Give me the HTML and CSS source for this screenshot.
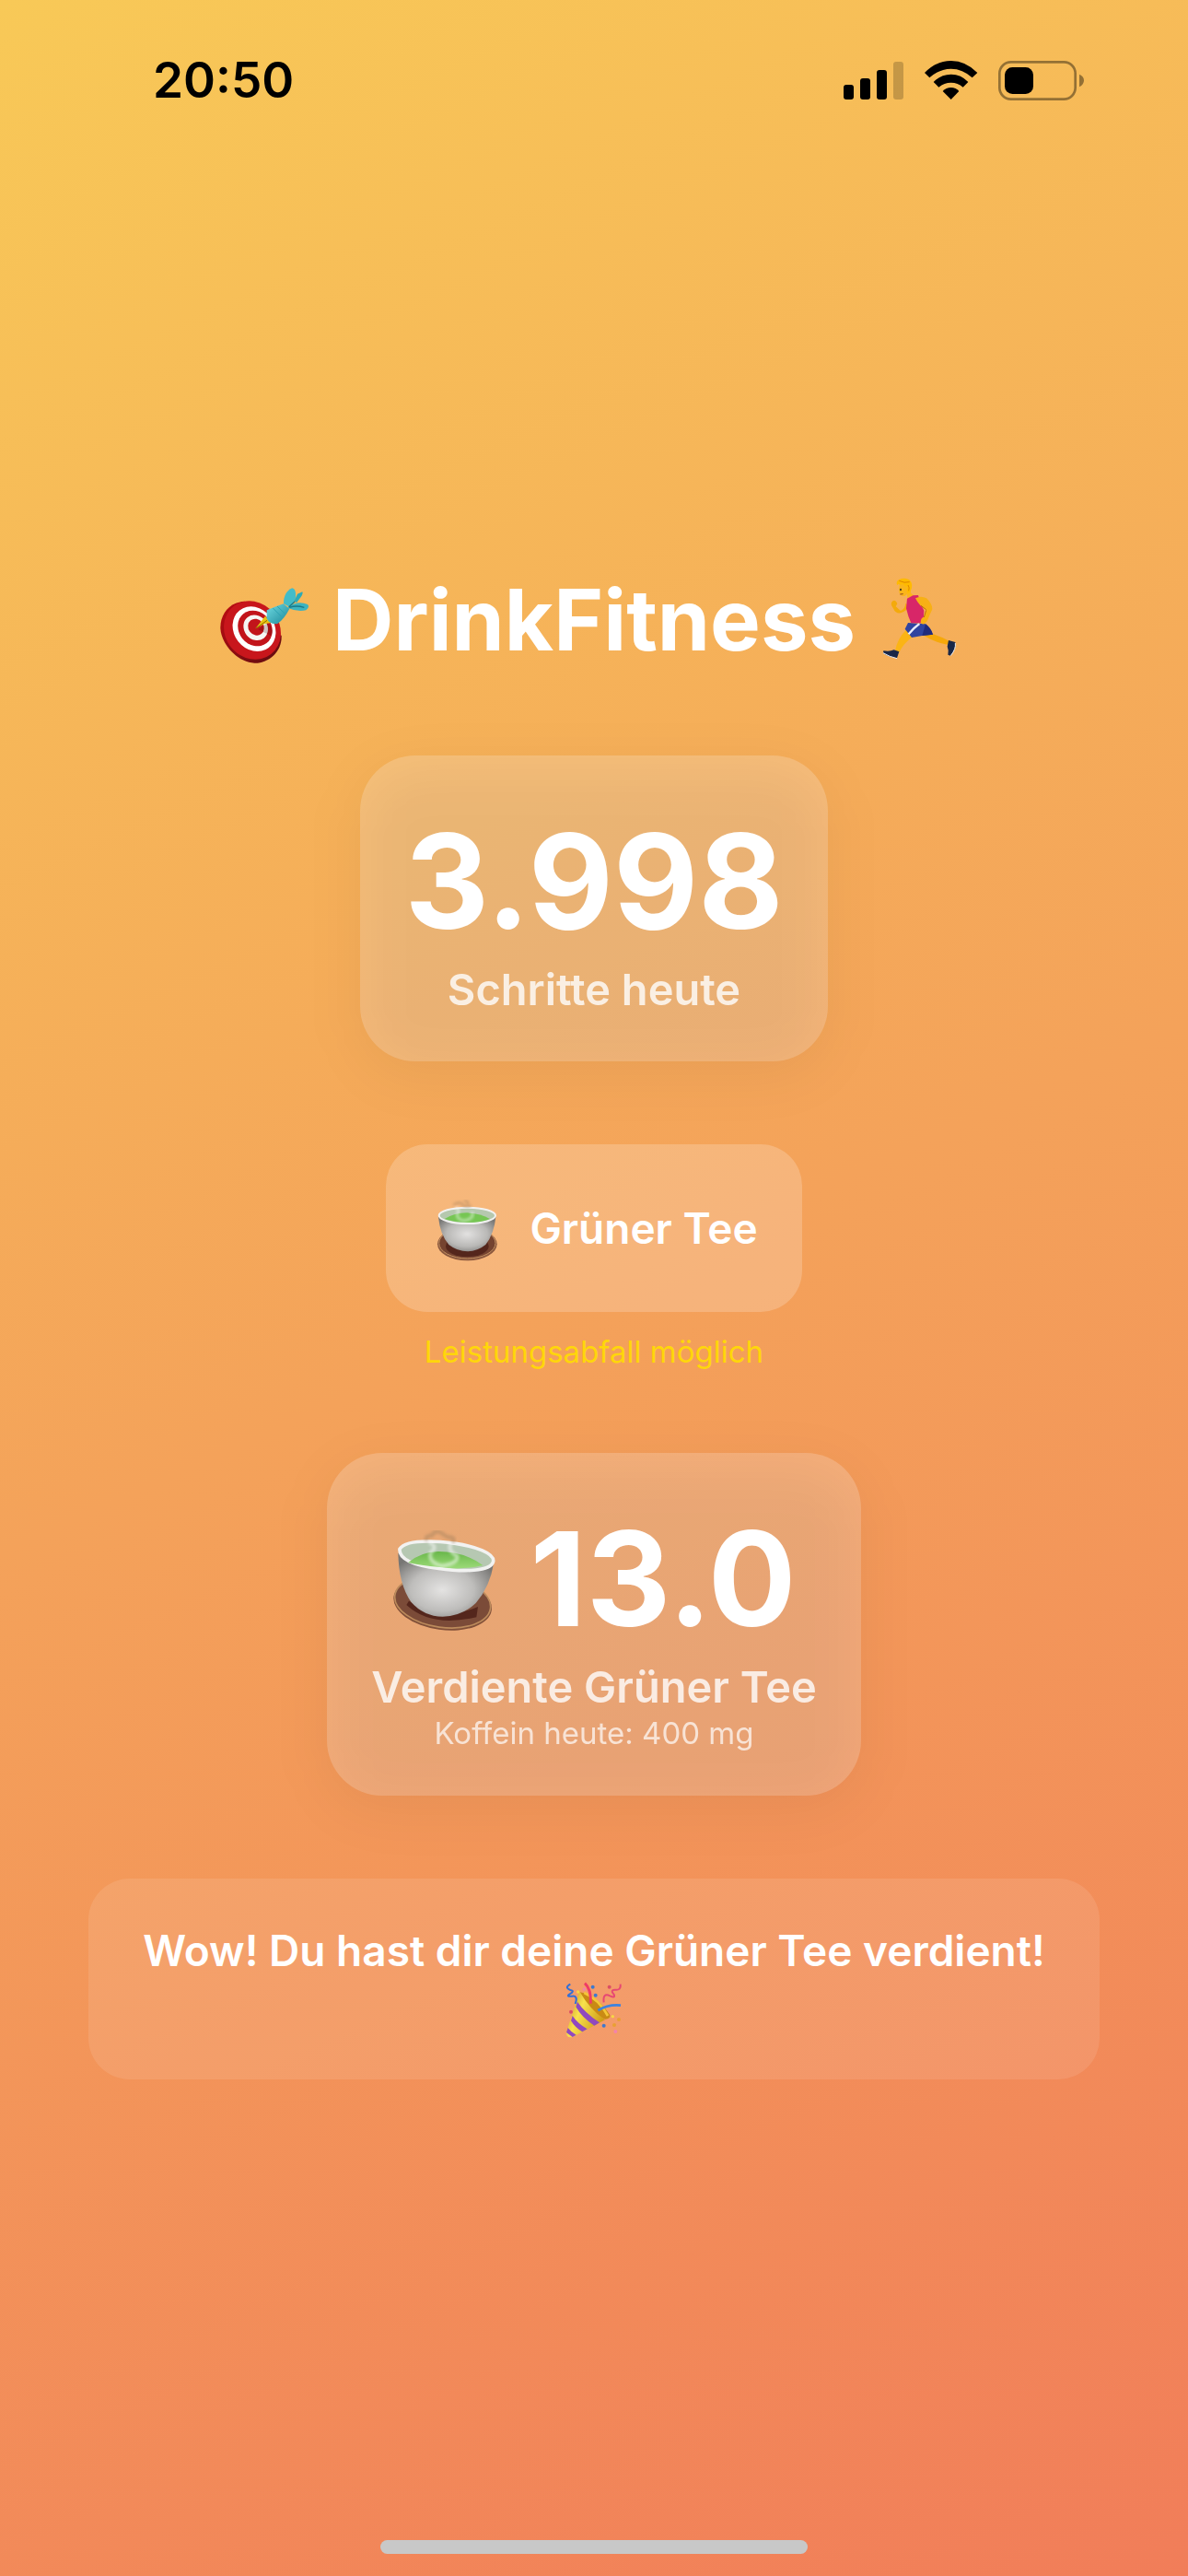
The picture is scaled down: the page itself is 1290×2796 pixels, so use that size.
FILE: index.html
```html
<!DOCTYPE html>
<html lang="de">
<head>
    <meta charset="UTF-8">
    <meta name="viewport" content="width=device-width, initial-scale=1.0">
    <title>DrinkFitness</title>
    <link rel="stylesheet" href="styles.css">
</head>
<body>
    <header class="status-bar">
        <time class="clock">20:50</time>
        <svg class="status-icons" viewBox="75 66 789 144" role="img" aria-label="Mobilfunk, WLAN, Akku">
            <!-- Mobilfunk -->
            <rect x="78" y="153" width="33" height="48" rx="9"/>
            <rect x="132" y="132" width="33" height="69" rx="9"/>
            <rect x="186" y="105" width="33" height="96" rx="9"/>
            <rect x="240" y="78" width="33" height="123" rx="9" opacity="0.2"/>
            <!-- WLAN -->
            <path d="M342 114Q380 75 428 75T514 114L497 130Q466 101 428 101T358 130Z"/>
            <path d="M371 144Q395 119 428 119T484 144L467 161Q450 146 428 146T388 161Z"/>
            <path d="M401 174Q412 162 428 162T454 174L428 201Z"/>
            <!-- Akku -->
            <rect x="586" y="79" width="247" height="121" rx="37" fill="none" stroke="#000" stroke-width="8" opacity="0.4"/>
            <rect x="603" y="96" width="93" height="87" rx="25"/>
            <path d="M846 119Q861 125 861 139T846 160Z" opacity="0.4"/>
        </svg>
    </header>

    <main class="container">
        <h1>
            <svg class="title-icon" viewBox="48 39 300 300" aria-hidden="true">
                <defs>
                    <linearGradient id="disc-side" x1="0" y1="0" x2="1" y2="1">
                        <stop offset="0" stop-color="#c00c12"/>
                        <stop offset="1" stop-color="#5c0d10"/>
                    </linearGradient>
                    <linearGradient id="dart-body" x1="0" y1="0" x2="1" y2="1">
                        <stop offset="0" stop-color="#6fdbe3"/>
                        <stop offset="1" stop-color="#1b8798"/>
                    </linearGradient>
                </defs>
                <path d="M140 128C92 130 60 168 61 216C63 262 110 325 172 329C220 330 262 290 260 240Z" fill="url(#disc-side)"/>
                <ellipse cx="165" cy="222" rx="89" ry="99" transform="rotate(-38 165 222)" fill="#c8161c"/>
                <ellipse cx="171" cy="218" rx="66" ry="77" transform="rotate(-38 171 218)" fill="#fff"/>
                <ellipse cx="174" cy="216" rx="53" ry="61" transform="rotate(-38 174 216)" fill="#c2141b"/>
                <ellipse cx="176" cy="214" rx="38" ry="43" transform="rotate(-38 176 214)" fill="#f6f6f4"/>
                <ellipse cx="177" cy="212" rx="25" ry="28" transform="rotate(-38 177 212)" fill="#c2141b"/>
                <path d="M184 220L214 198Q240 222 226 240Q208 232 184 220Z" fill="#300" opacity="0.2"/>
                <path d="M175 217L207 176L216 186L228 198L206 201Z" fill="#e9c211"/>
                <path d="M177 216L213 190" stroke="#8c6b00" stroke-width="3"/>
                <path d="M212 157Q236 147 266 136L286 152Q270 184 247 201Q220 204 212 184Z" fill="url(#dart-body)"/>
                <path d="M232 150L260 178M246 144L271 168" stroke="#2ba3b2" stroke-width="3" fill="none"/>
                <path d="M267 136C266 112 277 91 295 85C309 88 307 111 304 126L286 146Z" fill="#43bcc8"/>
                <path d="M302 126L312 104L328 97Q331 103 323 114L309 133Z" fill="#2caab7"/>
                <path d="M281 147Q312 124 345 138Q353 146 340 157Q312 163 281 150Z" fill="#3db3bf"/>
                <path d="M284 146L304 128M286 148Q308 140 334 148" stroke="#18798a" stroke-width="4" fill="none"/>
            </svg>
            <span>DrinkFitness</span>
            <svg class="title-icon" viewBox="945 39 300 300" aria-hidden="true">
                <path d="M1030 134Q1030 150 1014 159L998 145L1003 136Q1000 126 992 125Q981 129 984 141L991 153Q997 168 1014 166Q1034 160 1042 144Z" fill="#f4aa0b"/>
                <path d="M1107 232Q1140 239 1172 257L1166 269Q1130 264 1086 238Z" fill="#f6a80a"/>
                <path d="M1031 222Q1002 251 996 290L1009 294Q1024 264 1056 241Z" fill="#fbb414"/>
                <path d="M1170 255L1192 261Q1196 283 1176 305L1168 302Q1171 286 1166 275Z" fill="#192747"/>
                <path d="M1192 264Q1195 283 1177 305" stroke="#e8edf4" stroke-width="3" fill="none"/>
                <path d="M958 289Q978 293 992 286L1009 292L1002 313Q974 309 957 296Z" fill="#192747"/>
                <path d="M957 296Q978 309 1002 314" stroke="#e8edf4" stroke-width="3" fill="none"/>
                <path d="M1038 198L1095 202Q1112 214 1119 236L1084 240L1050 246L1028 218Z" fill="#3044a0"/>
                <path d="M1095 202Q1112 214 1119 236L1084 240Z" fill="#202b7c"/>
                <path d="M1075 201Q1058 213 1040 235" stroke="#e9edfa" stroke-width="7" fill="none"/>
                <path d="M1011 73Q1007 87 1009 99Q1014 114 1028 110L1034 105L1037 118L1058 108Q1043 104 1047 89L1038 70Z" fill="#fab51b"/>
                <path d="M1035 119L1054 109L1071 108Q1080 139 1090 158L1087 199L1048 199Q1038 178 1032 151Z" fill="#d82668"/>
                <path d="M1062 118Q1080 108 1098 118Q1118 137 1117 154Q1107 175 1100 193Q1087 209 1079 197Q1079 182 1089 179L1097 156Q1074 143 1062 118Z" fill="#f8b015"/>
                <path d="M1097 155L1080 142M1097 157L1090 180" stroke="#bd7006" stroke-width="3" fill="none"/>
                <path d="M1003 76Q997 64 1009 57Q1028 49 1042 58Q1057 72 1046 96L1037 103Q1032 91 1037 82Q1026 80 1021 71Q1014 76 1006 72Z" fill="#ffba00"/>
                <path d="M1009 61Q1026 70 1043 65M1038 75Q1044 83 1040 94" stroke="#de8500" stroke-width="3" fill="none"/>
                <ellipse cx="1014" cy="90" rx="3" ry="4" fill="#3c3222"/>
                <path d="M1012 105L1022 104" stroke="#8e4620" stroke-width="3"/>
            </svg>
        </h1>

        <section class="card">
            <p class="number">3.998</p>
            <p class="label">Schritte heute</p>
        </section>

        <div class="drink">
            <button type="button" class="drink-button">
                <svg class="drink-icon" viewBox="215 231 216 216" aria-hidden="true">
                    <defs>
                        <radialGradient id="bowl-small" cx="0.5" cy="0.5" r="0.6">
                            <stop offset="0" stop-color="#e2e1e0"/>
                            <stop offset="0.6" stop-color="#b9b8b6"/>
                            <stop offset="1" stop-color="#777674"/>
                        </radialGradient>
                        <filter id="steam">
                            <feGaussianBlur stdDeviation="4"/>
                        </filter>
                    </defs>
                    <ellipse cx="324" cy="391" rx="97" ry="54" fill="#8b583e"/>
                    <ellipse cx="324" cy="388" rx="92" ry="50" fill="#754330" stroke="#c29061" stroke-width="3"/>
                    <ellipse cx="324" cy="398" rx="70" ry="34" fill="#54261c"/>
                    <path d="M230 302Q235 358 264 393Q292 415 325 415Q358 414 384 393Q412 356 417 302Z" fill="url(#bowl-small)"/>
                    <ellipse cx="324" cy="298" rx="92" ry="26" fill="#b5c8ae" stroke="#f2f2f1" stroke-width="6"/>
                    <path d="M250 309Q282 290 322 289Q368 291 398 309Q368 321 324 321Q279 320 250 309Z" fill="#76c653"/>
                    <path d="M285 269Q302 282 292 292Q288 311 314 315Q350 308 339 286" fill="none" stroke="#fff" stroke-width="8" opacity="0.5" filter="url(#steam)"/>
                    <path d="M279 264Q299 249 310 263T337 265M313 249Q332 251 323 263" fill="none" stroke="#a8845f" stroke-width="8" opacity="0.5" filter="url(#steam)"/>
                </svg>
                <span>Grüner Tee</span>
            </button>
            <p class="warning">Leistungsabfall möglich</p>
        </div>

        <section class="card">
            <div class="result">
                <svg class="result-icon" viewBox="30 30 342 360" aria-hidden="true">
                    <defs>
                        <radialGradient id="bowl" cx="0.46" cy="0.58" r="0.6">
                            <stop offset="0" stop-color="#e4e3e2"/>
                            <stop offset="0.55" stop-color="#bebdbb"/>
                            <stop offset="1" stop-color="#777674"/>
                        </radialGradient>
                        <linearGradient id="tea" x1="0" y1="0" x2="0" y2="1">
                            <stop offset="0" stop-color="#69b74a"/>
                            <stop offset="1" stop-color="#9cda78"/>
                        </linearGradient>
                    </defs>
                    <ellipse cx="194" cy="292" rx="161" ry="86" transform="rotate(8 194 292)" fill="#815039"/>
                    <ellipse cx="194" cy="287" rx="157" ry="83" transform="rotate(8 194 287)" fill="#7b4b38" stroke="#bc8b5c" stroke-width="5"/>
                    <path d="M76 297Q155 371 304 337L309 303Q195 353 84 284Z" fill="#54261c"/>
                    <path d="M49 128Q51 230 91 287Q132 334 194 335Q258 333 302 291Q348 238 361 158Z" fill="url(#bowl)"/>
                    <path d="M54 115C75 84 165 88 237 97C301 107 362 128 359 155C352 190 257 189 181 178C104 169 51 151 54 115Z" fill="#b6c8b2" stroke="#f2f2f1" stroke-width="11"/>
                    <path d="M82 159Q122 125 178 123Q263 122 325 168Q256 185 184 174Q119 168 82 159Z" fill="url(#tea)"/>
                    <path d="M149 93Q181 107 155 126Q146 158 191 170Q248 161 240 137Q207 118 222 94" fill="none" stroke="#fff" stroke-width="12" opacity="0.5" filter="url(#steam)"/>
                    <path d="M144 87Q133 73 158 71Q173 49 193 65T218 76Q238 80 225 93" fill="none" stroke="#a8845f" stroke-width="13" opacity="0.5" filter="url(#steam)"/>
                </svg>
                <p class="number">13.0</p>
            </div>
            <p class="label">Verdiente Grüner Tee</p>
            <p class="caption">Koffein heute: 400 mg</p>
        </section>

        <p class="message">
            Wow! Du hast dir deine Grüner Tee verdient!
            <svg class="message-icon" viewBox="66 54 192 192" aria-hidden="true">
                <defs>
                    <linearGradient id="cone" x1="0" y1="0" x2="1" y2="0.5">
                        <stop offset="0" stop-color="#b98018"/>
                        <stop offset="0.45" stop-color="#f8e14d"/>
                        <stop offset="1" stop-color="#cf9d17"/>
                    </linearGradient>
                </defs>
                <path d="M116 91Q168 98 214 165Q217 178 198 179L140 151Z" fill="#c98a14"/>
                <path d="M130 93Q178 114 207 168" fill="none" stroke="#f3c737" stroke-width="8"/>
                <path d="M116 90Q110 92 107 113L71 224Q75 243 94 236L198 181Q148 147 116 90Z" fill="url(#cone)"/>
                <path d="M108 122Q131 157 180 190L163 200Q123 174 103 139ZM92 168Q108 192 140 211L124 220Q100 206 87 184ZM77 207Q86 220 104 230L92 237L72 222Z" fill="#9149bf"/>
                <path d="M132 62Q153 80 151 128" fill="none" stroke="#ef3b66" stroke-width="9"/>
                <path d="M85 65Q64 76 85 84Q101 87 83 97Q69 106 91 104Q111 102 101 129" fill="none" stroke="#346fd5" stroke-width="6"/>
                <path d="M248 65Q251 86 230 83Q214 84 226 97Q234 112 214 103Q190 91 194 124" fill="none" stroke="#e74773" stroke-width="6"/>
                <path d="M175 150Q209 130 249 134" fill="none" stroke="#3d83df" stroke-width="8"/>
                <g fill="#3d79ce"><circle cx="158" cy="74" r="6"/><circle cx="167" cy="101" r="6"/><circle cx="194" cy="200" r="6"/></g>
                <g fill="#dc4e65"><circle cx="87" cy="155" r="6"/><circle cx="212" cy="74" r="6"/></g>
                <g fill="#f383aa"><circle cx="130" cy="81" r="5"/><circle cx="232" cy="219" r="6"/></g>
                <g fill="#f7d743"><circle cx="110" cy="90" r="5"/><circle cx="223" cy="170" r="5"/></g>
                <g fill="#e9a032"><circle cx="243" cy="180" r="6"/><circle cx="228" cy="198" r="6"/></g>
            </svg>
        </p>
    </main>

    <footer class="home-indicator"></footer>
</body>
</html>
```
FILE: styles.css
```css
* {
    box-sizing: border-box;
}

body {
    font-family: Inter, 'Liberation Sans', sans-serif;
    margin: 0;
    min-height: 100vh;
    display: flex;
    flex-direction: column;
    background: linear-gradient(156deg, #f8c957 0%, #f4a25a 50%, #f17d59 100%);
    color: white;
}

h1, p {
    margin: 0;
}

svg {
    display: block;
    flex-shrink: 0;
}

/* Statusleiste */
.status-bar {
    display: flex;
    align-items: center;
    justify-content: space-between;
    height: 178px;
    padding: 0 112px 4px 166px;
    color: black;
}

.clock {
    font-size: 53px;
    font-weight: 600;
}

.status-icons {
    width: 263px;
    height: 48px;
}

.container {
    flex: 1;
    display: flex;
    flex-direction: column;
    align-items: center;
    justify-content: center;
    gap: 90px;
    padding: 0 96px;
}

h1 {
    display: flex;
    align-items: center;
    gap: 26px;
    font-size: 92px;
    font-weight: 700;
    line-height: 114px;
}

.title-icon {
    width: 100px;
    height: 100px;
}

/* Karten */
.card {
    position: relative;
    z-index: 0;
    padding: 48px;
    border-radius: 60px;
    background-color: rgba(255, 255, 255, 0.2);
    text-align: center;
}

/* Der Schatten scheint durch die Karte durch */
.card::before {
    content: '';
    position: absolute;
    inset: 15px 0 -15px;
    z-index: -1;
    border-radius: 60px;
    background-color: rgba(0, 0, 0, 0.05);
    filter: blur(30px);
}

.number {
    font-size: 142px;
    font-weight: 700;
    line-height: 176px;
}

.label {
    font-size: 47px;
    font-weight: 600;
    line-height: 60px;
    opacity: 0.8;
}

.caption {
    font-size: 33px;
    line-height: 40px;
    opacity: 0.7;
}

.drink {
    display: flex;
    flex-direction: column;
    align-items: center;
    gap: 24px;
}

.drink-button {
    display: flex;
    align-items: center;
    gap: 32px;
    height: 182px;
    padding: 0 48px 0 52px;
    border: none;
    border-radius: 45px;
    background-color: rgba(255, 255, 255, 0.2);
    color: white;
    font-family: inherit;
    font-size: 46px;
    font-weight: 600;
    cursor: pointer;
}

.drink-icon {
    width: 72px;
    height: 72px;
}

.warning {
    color: #ffd60a;
    font-size: 33px;
    line-height: 39px;
}

.result {
    display: flex;
    align-items: center;
    justify-content: center;
    gap: 36px;
}

.result-icon {
    width: 114px;
    height: 120px;
}

.message {
    width: 100%;
    padding: 48px;
    border-radius: 45px;
    background-color: rgba(255, 255, 255, 0.1);
    text-align: center;
    font-size: 46px;
    font-weight: 600;
    line-height: 61px;
}

.message-icon {
    display: inline-block;
    width: 64px;
    height: 64px;
    margin: -16px 0;
    vertical-align: middle;
}

.home-indicator {
    width: 36%;
    height: 15px;
    margin: 63px auto 24px;
    border-radius: 8px;
    background-color: #c8c8c8;
}
```
